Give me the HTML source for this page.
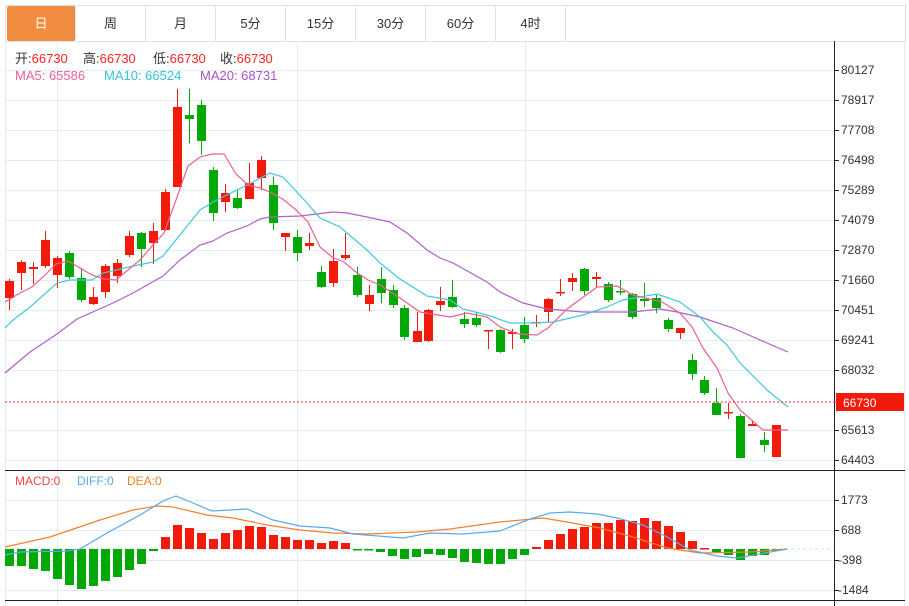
<!DOCTYPE html>
<html><head><meta charset="utf-8">
<style>
html,body{margin:0;padding:0;background:#fff;width:909px;height:606px;overflow:hidden;font-family:"Liberation Sans","Noto Sans CJK SC",sans-serif}
.tabs{position:absolute;left:5px;top:5px;width:899px;height:35px;border:1px solid #dde3e8;box-sizing:content-box}
.tab{position:absolute;top:0;height:35px;width:69px;border-right:1px solid #dde3e8;text-align:center;line-height:35px;font-size:13px;color:#333}
.tab.on{background:#f28c3e;color:#fff;border-radius:2px}
svg{position:absolute;left:0;top:0}
</style></head><body>
<div class="tabs">
<div class="tab on" style="left:1px;width:68px">日</div>
<div class="tab" style="left:70px">周</div>
<div class="tab" style="left:140px">月</div>
<div class="tab" style="left:210px">5分</div>
<div class="tab" style="left:280px">15分</div>
<div class="tab" style="left:350px">30分</div>
<div class="tab" style="left:420px">60分</div>
<div class="tab" style="left:490px">4时</div>
</div>
<svg id="s" width="909" height="606" style="top:0" font-family="Liberation Sans, Noto Sans CJK SC, sans-serif">
<g stroke="#e3ecf2" stroke-width="1">
<line x1="5.5" y1="41" x2="5.5" y2="606"/>
<line x1="904.5" y1="41" x2="904.5" y2="606"/>
<line x1="57.5" y1="41" x2="57.5" y2="606"/>
<line x1="297.5" y1="41" x2="297.5" y2="606"/>
<line x1="525.5" y1="41" x2="525.5" y2="606"/>
<g id="hg"></g>
</g>
<line x1="834.5" y1="41" x2="834.5" y2="606" stroke="#222"/>
<line x1="5" y1="470.5" x2="905" y2="470.5" stroke="#222"/>
<line x1="5" y1="600.5" x2="905" y2="600.5" stroke="#222"/>
<g font-size="12" fill="#333">
<text x="841" y="74">80127</text><text x="841" y="104">78917</text><text x="841" y="134">77708</text>
<text x="841" y="164">76498</text><text x="841" y="194">75289</text><text x="841" y="224">74079</text>
<text x="841" y="254">72870</text><text x="841" y="284">71660</text><text x="841" y="314">70451</text>
<text x="841" y="344">69241</text><text x="841" y="374">68032</text><text x="841" y="434">65613</text>
<text x="841" y="464">64403</text>
<text x="841" y="504">1773</text><text x="841" y="534">688</text><text x="838" y="564">-398</text><text x="838" y="594">-1484</text>
</g>
<g id="cd"></g>
<line x1="5" y1="402" x2="834" y2="402" stroke="#f22" stroke-dasharray="2,2"/>
<rect x="836" y="393" width="68" height="18" fill="#f21a0a"/>
<line x1="834" y1="402" x2="840" y2="402" stroke="#f22"/>
<text x="843" y="407" font-size="12" fill="#fff">66730</text>
<g font-size="13">
<text x="15" y="63" fill="#333">开:<tspan fill="#f22">66730</tspan></text>
<text x="83" y="63" fill="#333">高:<tspan fill="#f22">66730</tspan></text>
<text x="153" y="63" fill="#333">低:<tspan fill="#f22">66730</tspan></text>
<text x="220" y="63" fill="#333">收:<tspan fill="#f22">66730</tspan></text>
<text x="15" y="80" fill="#f06292">MA5: 65586</text>
<text x="104" y="80" fill="#35c4db">MA10: 66524</text>
<text x="200" y="80" fill="#a855c0">MA20: 68731</text>
</g>
<g font-size="12">
<text x="15" y="485" fill="#f44">MACD:0</text>
<text x="77" y="485" fill="#5aa9ee">DIFF:0</text>
<text x="127" y="485" fill="#f5802a">DEA:0</text>
</g>
</svg>
<script>
var NS="http://www.w3.org/2000/svg",s=document.getElementById("s");
var hg=document.getElementById("hg");
[70,100,130,160,190,220,250,280,310,340,370,430,460,500,530,560,590].forEach(function(y){
 var l=document.createElementNS(NS,"line");l.setAttribute("x1",5);l.setAttribute("x2",834);l.setAttribute("y1",y+.5);l.setAttribute("y2",y+.5);hg.appendChild(l);
 var t=document.createElementNS(NS,"line");t.setAttribute("x1",834);t.setAttribute("x2",839);t.setAttribute("y1",y+.5);t.setAttribute("y2",y+.5);t.setAttribute("stroke","#222");s.appendChild(t);});
var cd=document.getElementById("cd");
function el(n,a){var e=document.createElementNS(NS,n);for(var k in a)e.setAttribute(k,a[k]);cd.appendChild(e);return e}
var R="#f21a0a",G="#02a805";
var c=[[9,'R',281,298,279,310],[21,'R',262,273,260,290],[33,'R',267,269,262,284],[45,'R',240,266,231,268],[57,'R',258,275,256,288],[69,'G',253,277,251,279],[81,'G',278,300,268,302],[93,'R',297,304,287,305],[105,'R',266,292,264,298],[117,'R',263,276,259,283],[129,'R',236,255,231,257],[141,'G',233,249,232,267],[153,'R',231,243,223,264],[165,'R',192,230,189,231],[177,'R',107,187,89,187],[189,'G',115,119,89,143],[201,'G',105,141,100,155],[213,'G',170,213,167,221],[225,'R',193,202,184,212],[237,'G',198,208,190,209],[249,'R',183,199,163,199],[261,'R',160,178,156,190],[273,'G',185,223,177,230],[285,'R',233,237,233,251],[297,'G',237,253,230,261],[309,'R',243,246,233,250],[321,'G',272,287,266,288],[333,'R',261,283,249,287],[345,'R',255,258,233,260],[357,'G',275,295,267,297],[369,'R',295,304,285,311],[381,'G',279,293,267,303],[393,'G',290,305,285,308],[404,'G',308,337,305,340],[417,'R',331,342,312,342],[428,'R',310,341,309,342],[440,'R',301,305,287,311],[452,'G',297,307,280,308],[464,'G',319,324,312,328],[476,'G',318,325,313,327],[488,'R',330,331,330,349],[500,'G',330,352,329,353],[512,'R',332,334,329,349],[524,'G',325,339,317,343],[536,'R',322,323,315,327],[548,'R',299,312,298,322],[560,'R',292,293,279,296],[572,'R',278,282,273,291],[584,'G',269,291,268,295],[596,'R',277,279,272,287],[608,'G',284,300,282,302],[620,'G',291,292,280,295],[632,'G',294,317,293,319],[644,'G',299,301,283,307],[656,'G',298,308,295,313],[668,'G',320,329,318,332],[680,'R',328,333,328,339],[692,'G',360,374,354,380],[704,'G',380,393,376,395],[716,'G',403,415,388,415],[728,'R',412,413,403,419],[740,'G',416,458,414,458],[752,'R',424,426,420,426],[764,'G',440,445,432,452],[776,'R',425,457,425,457]];
c.forEach(function(d){var col=d[1]=='R'?R:G;
 el("line",{x1:d[0]+.5,x2:d[0]+.5,y1:d[4],y2:d[5],stroke:col});
 el("rect",{x:d[0]-4,y:d[2],width:9,height:Math.max(1.5,d[3]-d[2]),fill:col});});
function pl(p,col){el("polyline",{points:p,fill:"none",stroke:col,"stroke-width":1.2});}
pl("5,373 30,352 57,334 77,319 113,303 133,293 163,276 180,260 200,245 213,241 227,233 247,226 260,219 270,217 300,216 333,212 347,213 367,217 390,222 407,233 427,250 440,258 453,263 487,282 500,292 523,303 547,309 583,312 633,312 660,309 677,312 700,317 733,328 760,340 788,352","#b060c8");
pl("5,328 13,320 30,307 57,283 70,280 92,280 103,273 138,265 153,262 163,256 200,210 213,202 253,182 270,173 283,177 307,203 320,218 340,227 367,250 380,263 400,279 427,296 450,300 463,309 487,315 510,323 533,323 553,322 583,315 607,307 623,300 657,294 680,302 700,317 713,332 727,345 740,363 750,373 767,390 788,407","#3fc9df");
pl("5,302 20,293 32,287 44,276 56,264 68,261 80,268 92,275 104,279 116,280 128,270 140,260 152,246 164,233 176,200 188,166 200,157 212,154 224,154 236,174 248,185 260,188 272,193 284,200 296,210 308,222 320,247 332,257 344,262 356,272 368,280 380,285 400,298 420,312 450,317 467,313 487,317 500,327 518,334 537,335 548,328 567,309 597,287 617,286 633,295 662,302 680,313 692,327 703,348 717,368 728,393 740,410 763,430 788,430","#ef5f8d");
el("line",{x1:5,x2:834,y1:549,y2:549,stroke:"#bfe3ea","stroke-dasharray":"3,3"});
var m=[[9,566],[21,566],[33,569],[45,571],[57,579],[69,585],[81,589],[93,586],[105,581],[117,577],[129,570],[141,564],[153,551],[165,537],[177,525],[189,528],[201,533],[213,539],[225,533],[237,530],[249,526],[261,527],[273,535],[285,537],[297,540],[309,540],[321,543],[333,541],[345,543],[357,550],[368,550],[380,552],[392,556],[404,559],[416,557],[428,554],[440,555],[452,558],[464,562],[476,563],[488,564],[500,564],[512,559],[524,555],[536,547],[548,540],[560,534],[572,529],[584,527],[596,523],[608,523],[620,520],[632,521],[644,518],[656,521],[668,526],[680,532],[692,541],[704,548],[716,552],[728,555],[740,560],[752,556],[764,555],[776,551]];
m.forEach(function(d){var z=549,col=d[1]<z?R:G;el("rect",{x:d[0]-4,y:Math.min(z,d[1]),width:9,height:Math.max(1.5,Math.abs(d[1]-z)),fill:col});});
pl("5,547 50,537 100,520 133,510 157,506 173,507 207,515 233,518 267,525 300,530 333,533 367,534 417,532 450,529 500,522 543,518 567,522 600,528 633,537 667,548 700,553 750,552 787,549","#f5802a");
pl("5,555 20,552 67,551 80,549 107,533 140,515 163,501 176,496 193,503 212,511 247,509 273,520 300,526 330,528 353,534 403,538 430,533 463,534 500,531 530,519 550,513 570,512 597,514 617,518 643,525 667,537 690,550 717,556 737,558 787,549","#5aa9ee");
</script>
</body></html>
